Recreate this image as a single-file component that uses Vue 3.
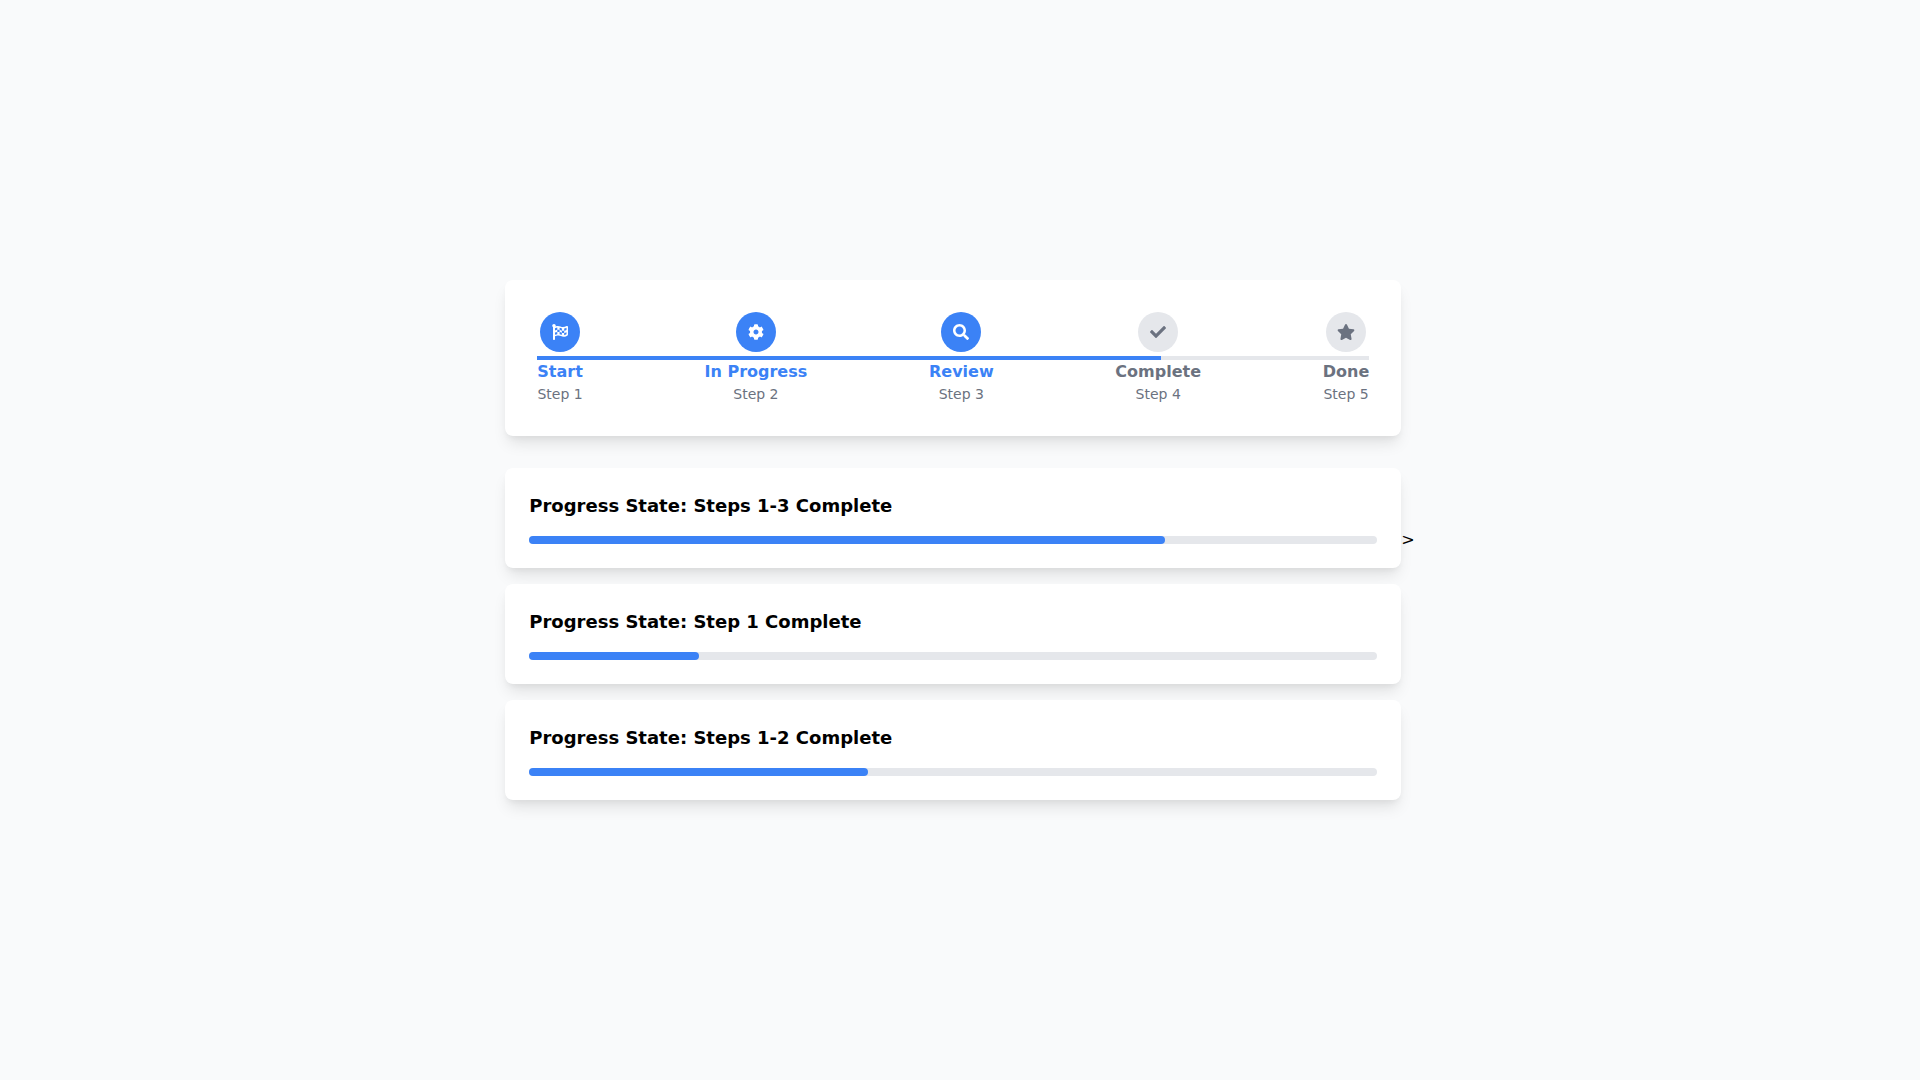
<template>
    <main class="page">
        <div class="content">
            <section class="card stepper">
                <div class="line">
                    <div class="line-fill" :style="{width: line_progress + '%'}"></div>
                </div>
                <ol class="steps">
                    <li v-for="(step, index) in lst_steps"
                        :key="step.id"
                        class="step"
                        :class="{active: index < current_step}">
                        <span class="circle">
                            <svg class="icon" :viewBox="step.viewBox" aria-hidden="true">
                                <path :d="step.icon" />
                            </svg>
                        </span>
                        <span class="title">{{ step.title }}</span>
                        <span class="number">Step {{ index + 1 }}</span>
                    </li>
                </ol>
            </section>

            <section class="states">
                <div v-for="state in lst_states" :key="state.id" class="card state">
                    <h3 :id="state.id">{{ state.title }}</h3>
                    <div class="bar"
                        role="progressbar"
                        :aria-labelledby="state.id"
                        :aria-valuenow="state.progress">
                        <div class="bar-fill" :style="{width: state.progress + '%'}"></div>
                    </div>
                </div>
            </section>
        </div>
        <span>&gt;</span>
    </main>
</template>

<script setup>
import { ref } from 'vue';

const current_step = ref(3)
const line_progress = ref(75)

const lst_steps = ref([
    {
        id: 'start',
        title: 'Start',
        viewBox: '0 0 512 512',
        icon: 'M243.2 189.9V258c26.1 5.9 49.3 15.6 73.6 22.3v-68.2c-26-5.8-49.4-15.5-73.6-22.2zm223.3-123c-34.3 15.9-76.5 31.9-117 31.9C296 98.8 251.7 64 184.3 64c-25 0-47.3 4.4-68 12 2.8-7.3 4.1-15.2 3.6-23.6C118.1 24 94.8 1.2 66.3 0 34.3-1.3 8 24.3 8 56c0 19 9.5 35.8 24 45.9V488c0 13.3 10.7 24 24 24h16c13.3 0 24-10.7 24-24v-94.4c28.3-12.1 63.6-22.1 114.4-22.1 53.6 0 97.8 34.8 165.2 34.8 48.2 0 86.7-16.3 122.5-40.9 8.7-6 13.8-15.8 13.8-26.4V95.9c.1-23.3-24.2-38.8-45.4-29zM169.6 325.5c-25.8 2.7-50 8.2-73.6 16.6v-70.5c26.2-9.3 47.5-15 73.6-17.4v71.3zM464 191c-23.6 9.8-46.3 19.5-73.6 23.9V286c24.8-3.4 51.4-11.8 73.6-26v70.5c-25.1 16.1-48.5 24.7-73.6 27.1V286c-27 3.7-47.9 1.5-73.6-5.6v67.4c-23.9-7.4-47.3-16.7-73.6-21.3V258c-19.7-4.4-40.8-6.8-73.6-3.8v-70c-22.4 3.1-44.6 10.2-73.6 20.9v-70.5c33.2-12.2 50.1-19.8 73.6-22v71.6c27-3.7 48.4-1.3 73.6 5.7v-67.4c23.7 7.4 47.2 16.7 73.6 21.3v68.4c23.7 5.3 47.6 6.9 73.6 2.7V143c27-4.8 52.3-13.6 73.6-22.5z',
    },
    {
        id: 'progress',
        title: 'In Progress',
        viewBox: '0 0 512 512',
        icon: 'M487.4 315.7l-42.6-24.6c4.3-23.2 4.3-47 0-70.2l42.6-24.6c4.9-2.8 7.1-8.6 5.5-14-11.1-35.6-30-67.8-54.7-94.6-3.8-4.1-10-5.1-14.8-2.3L380.8 110c-17.9-15.4-38.5-27.3-60.8-35.1V25.8c0-5.6-3.9-10.5-9.4-11.7-36.7-8.2-74.3-7.8-109.2 0-5.5 1.2-9.4 6.1-9.4 11.7V75c-22.2 7.9-42.8 19.8-60.8 35.1L88.7 85.5c-4.9-2.8-11-1.9-14.8 2.3-24.7 26.7-43.6 58.9-54.7 94.6-1.7 5.4.6 11.2 5.5 14L67.3 221c-4.3 23.2-4.3 47 0 70.2l-42.6 24.6c-4.9 2.8-7.1 8.6-5.5 14 11.1 35.6 30 67.8 54.7 94.6 3.8 4.1 10 5.1 14.8 2.3l42.6-24.6c17.9 15.4 38.5 27.3 60.8 35.1v49.2c0 5.6 3.9 10.5 9.4 11.7 36.7 8.2 74.3 7.8 109.2 0 5.5-1.2 9.4-6.1 9.4-11.7v-49.2c22.2-7.9 42.8-19.8 60.8-35.1l42.6 24.6c4.9 2.8 11 1.9 14.8-2.3 24.7-26.7 43.6-58.9 54.7-94.6 1.5-5.5-.7-11.3-5.6-14.1zM256 336c-44.1 0-80-35.9-80-80s35.9-80 80-80 80 35.9 80 80-35.9 80-80 80z',
    },
    {
        id: 'review',
        title: 'Review',
        viewBox: '0 0 512 512',
        icon: 'M505 442.7L405.3 343c-4.5-4.5-10.6-7-17-7H372c27.6-35.3 44-79.7 44-128C416 93.1 322.9 0 208 0S0 93.1 0 208s93.1 208 208 208c48.3 0 92.7-16.4 128-44v16.3c0 6.4 2.5 12.5 7 17l99.7 99.7c9.4 9.4 24.6 9.4 33.9 0l28.3-28.3c9.4-9.4 9.4-24.6.1-34zM208 336c-70.7 0-128-57.2-128-128 0-70.7 57.2-128 128-128 70.7 0 128 57.2 128 128 0 70.7-57.2 128-128 128z',
    },
    {
        id: 'complete',
        title: 'Complete',
        viewBox: '0 0 512 512',
        icon: 'M173.9 439.4l-166.4-166.4c-10-10-10-26.2 0-36.2l36.2-36.2c10-10 26.2-10 36.2 0L192 312.7 432.1 72.6c10-10 26.2-10 36.2 0l36.2 36.2c10 10 10 26.2 0 36.2l-294.4 294.4c-10 10-26.2 10-36.2 0z',
    },
    {
        id: 'done',
        title: 'Done',
        viewBox: '0 0 576 512',
        icon: 'M259.3 17.8L194 150.2 47.9 171.5c-26.2 3.8-36.7 36.1-17.7 54.6l105.7 103-25 145.5c-4.5 26.3 23.2 46 46.4 33.7L288 439.6l130.7 68.7c23.2 12.2 50.9-7.4 46.4-33.7l-25-145.5 105.7-103c19-18.5 8.5-50.8-17.7-54.6L382 150.2 316.7 17.8c-11.7-23.6-45.6-23.9-57.4 0z',
    },
])

const lst_states = ref([
    {id: 'state-3', title: 'Progress State: Steps 1-3 Complete', progress: 75},
    {id: 'state-1', title: 'Progress State: Step 1 Complete', progress: 20},
    {id: 'state-2', title: 'Progress State: Steps 1-2 Complete', progress: 40},
])
</script>

<style>
body {
    background-color: #f9fafb;
}
</style>

<style scoped>
.page {
    display: flex;
    justify-content: center;
    align-items: center;
    min-height: 100vh;
    font-family: "DejaVu Sans", sans-serif;
    font-size: 16px;
    line-height: 24px;
    color: #000;
}

.content {
    display: flex;
    flex-direction: column;
    gap: 32px;
    width: 100%;
    max-width: 896px;
}

.card {
    background-color: #fff;
    border-radius: 8px;
    box-shadow: 0 10px 15px -3px rgba(0, 0, 0, .1), 0 4px 6px -2px rgba(0, 0, 0, .05);
}

.stepper {
    position: relative;
    padding: 32px;
}

/* runs between the circles and their titles */
.line {
    position: absolute;
    top: 50%;
    left: 32px;
    right: 32px;
    height: 4px;
    margin-top: -2px;
    background-color: #e5e7eb;
}

.line-fill {
    height: 100%;
    background-color: #3b82f6;
}

.steps {
    display: flex;
    justify-content: space-between;
    margin: 0;
    padding: 0;
    list-style: none;
}

.step {
    display: flex;
    flex-direction: column;
    align-items: center;
    color: #6b7280;
}

.circle {
    display: flex;
    justify-content: center;
    align-items: center;
    width: 40px;
    height: 40px;
    margin-bottom: 8px;
    border-radius: 50%;
    background-color: #e5e7eb;
}

.icon {
    height: 16px;
    fill: currentColor;
}

.title {
    font-weight: 600;
}

.number {
    font-size: 14px;
    line-height: 20px;
}

.active .circle {
    background-color: #3b82f6;
    color: #fff;
}

.active .title {
    color: #3b82f6;
}

.states {
    display: flex;
    flex-direction: column;
    gap: 16px;
}

.state {
    padding: 24px;
}

.state h3 {
    margin: 0 0 16px;
    font-size: 18px;
    line-height: 28px;
    font-weight: 600;
}

.bar {
    height: 8px;
    border-radius: 4px;
    background-color: #e5e7eb;
}

.bar-fill {
    height: 100%;
    border-radius: 4px;
    background-color: #3b82f6;
}
</style>
